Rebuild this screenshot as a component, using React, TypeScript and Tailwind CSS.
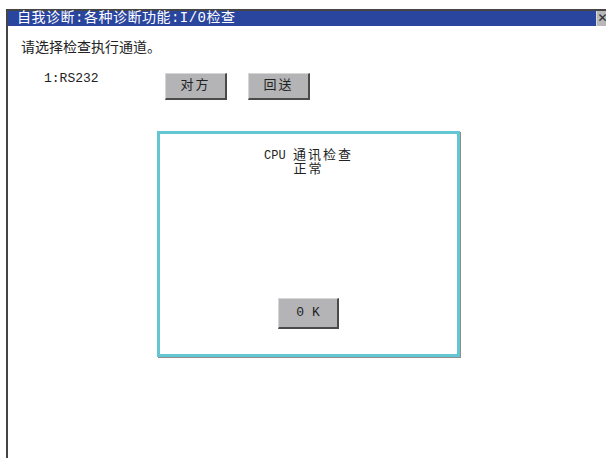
const font = { fontFamily: '"Liberation Mono", "Noto Sans CJK SC", monospace' };

function PanelButton({ label, className }: { label: string; className?: string }) {
  return (
    <button
      className={
        "flex items-center justify-center bg-[#b4b4b6] text-[#222] border border-t-[#d6d6d6] border-l-[#d6d6d6] border-r-2 border-b-2 border-r-[#4a4a4a] border-b-[#4a4a4a] " +
        (className ?? "")
      }
    >
      {label}
    </button>
  );
}

export default function App() {
  return (
    <div className="w-[606px] h-[458px] overflow-hidden bg-white pt-[9px] pl-[6px]" style={font}>
      <div className="w-[620px] h-[449px] border-t-2 border-l-2 border-[#454545]">
        {/* title bar */}
        <div className="flex h-[15px]">
          <div className="w-[588px] bg-[#2a459e] text-white text-[14px] leading-[15px] tracking-[0.5px] pl-[9px] whitespace-nowrap">
            自我诊断:各种诊断功能:I/0检查
          </div>
          <div className="w-px bg-[#d8d8e0]" />
          <div className="w-[18px] bg-[#b8b8ba] text-[#333] text-[15px] leading-[15px] pl-px">✕</div>
        </div>

        <div className="pl-[13px] pt-[12px]">
          <p className="text-[14px] leading-[20px] text-[#222]">请选择检查执行通道。</p>

          <div className="flex items-start mt-[15px]">
            <span className="w-[144px] pl-[23px] -mt-[2px] text-[13px] leading-[16px] text-[#222]">1:RS232</span>
            <PanelButton label="对方" className="w-[62px] h-[27px] text-[13px] tracking-[2px]" />
            <PanelButton label="回送" className="w-[62px] h-[27px] text-[13px] tracking-[2px] ml-[21px]" />
          </div>

          {/* dialog */}
          <div className="mt-[31px] ml-[136px] w-[303px] h-[226px] border-[3px] border-[#63c6d0] shadow-[1px_1px_0_#8e8e8e] flex flex-col bg-white">
            <div className="pt-[15px] text-center text-[13px] leading-[13px] tracking-[2px] text-[#222]">
              <div className="h-[14px]">
                <span className="text-[12px] tracking-normal">CPU </span>通讯检查
              </div>
              <div className="h-[13px]">正常</div>
            </div>
            <PanelButton label="0 K" className="mt-auto mb-[25px] mx-auto w-[61px] h-[31px] text-[13px]" />
          </div>
        </div>
      </div>
    </div>
  );
}
